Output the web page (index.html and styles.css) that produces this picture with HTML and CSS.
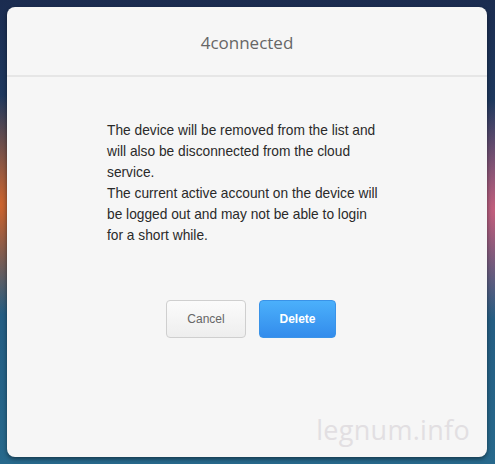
FILE: index.html
```html
<!DOCTYPE html>
<html>
<head>
<meta charset="utf-8">
<link rel="stylesheet" href="styles.css">
</head>
<body>
<div class="dialog">
  <div class="header">4connected</div>
  <div class="content">
    <p class="msg">The device will be removed from the list and will also be disconnected from the cloud service.<br>The current active account on the device will be logged out and may not be able to login for a short while.</p>
    <div class="actions">
      <button class="btn cancel">Cancel</button>
      <button class="btn delete">Delete</button>
    </div>
  </div>
  <div class="watermark">legnum.info</div>
</div>
</body>
</html>
```
FILE: styles.css
```css
html, body {
  margin: 0;
  height: 100%;
}
body {
  box-sizing: border-box;
  padding: 7px 8px 7px 7px;
  background:
    radial-gradient(ellipse 60px 110px at 0px 205px, rgba(215,100,40,0.95), rgba(215,100,40,0) 100%),
    radial-gradient(ellipse 60px 110px at 495px 210px, rgba(205,95,125,0.95), rgba(205,95,125,0) 100%),
    linear-gradient(to bottom, #1b2c50 0%, #1f3d63 30%, #235a80 60%, #27698c 100%);
  font-family: "Liberation Sans", Arial, sans-serif;
}
.dialog {
  position: relative;
  height: 450px;
  background: #f6f6f6;
  border-radius: 8px;
  box-shadow: 0 2px 4px rgba(0,0,0,0.45);
  display: flex;
  flex-direction: column;
}
.header {
  height: 70px;
  border-bottom: 2px solid #e6e6e6;
  display: flex;
  align-items: center;
  justify-content: center;
  font-family: "Open Sans", "Noto Sans", sans-serif;
  font-size: 17px;
  color: #666;
  padding-top: 2px;
  box-sizing: border-box;
}
.content {
  display: flex;
  flex-direction: column;
  align-items: center;
}
.msg {
  width: 278px;
  margin: 43px 0 0 0;
  padding-right: 2px;
  font-size: 13.75px;
  line-height: 21px;
  color: #2a2a2a;
}
.actions {
  display: flex;
  gap: 13px;
  margin-top: 54px;
  padding-left: 8px;
}
.btn {
  height: 38px;
  border-radius: 4px;
  font-family: "Liberation Sans", Arial, sans-serif;
  font-size: 12px;
  padding: 0;
  cursor: pointer;
}
.cancel {
  width: 80px;
  border: 1px solid #cfcfcf;
  background: linear-gradient(to bottom, #fbfbfb, #eeeeee);
  color: #666;
}
.delete {
  width: 77px;
  border: 1px solid #3a93e8;
  background: linear-gradient(to bottom, #4bb0fb, #338cec);
  color: #fff;
  font-weight: bold;
}
.watermark {
  position: absolute;
  right: 17px;
  bottom: 9px;
  font-family: "Open Sans", "Noto Sans", sans-serif;
  font-size: 27px;
  color: #e2dfe2;
  letter-spacing: 0.3px;
}
```
